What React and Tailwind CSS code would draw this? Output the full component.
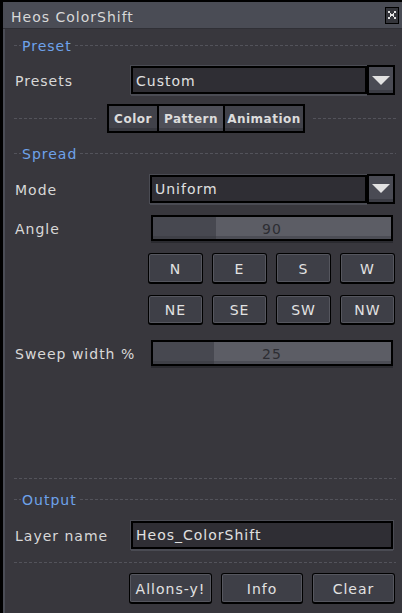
import React from 'react';

const Dash = ({ className = '' }) => (
    <div className={`h-px bg-[repeating-linear-gradient(90deg,#53535b_0_3px,transparent_3px_5px)] ${className}`} />
);

const Header = ({ title }) => (
    <div className="flex items-center h-[20px]">
        <Dash className="w-[7px]" />
        <span className="px-[1px] pt-[1px] text-[#6ea2ea]">{title}</span>
        <Dash className="flex-1 ml-[2px]" />
    </div>
);

const Field = ({ children, className = '' }) => (
    <div className={`h-[28px] bg-[#2f2e34] border-2 border-black shadow-[0_2px_0_0_#4a4b53,0_0_0_1px_#4a4b53] flex items-center pl-[3px] pt-[1px] text-[#e0e0e0] ${className}`}>
        {children}
    </div>
);

const Arrow = () => (
    <div className="w-[28px] h-[30px] bg-[#4a4b54] border-2 border-black shadow-[inset_0_-3px_0_#3b3c44] flex items-center justify-center">
        <svg width="18" height="9" viewBox="0 0 18 9">
            <polygon points="0,0 18,0 9,9" fill="#e2e2e2" />
        </svg>
    </div>
);

const Slider = ({ fill, value }) => (
    <div className="grid w-[242px] h-[26px] border-2 border-black bg-[#5c5d65] shadow-[inset_0_-3px_0_#4c4d55,0_2px_0_#2a2a2f]">
        <div className="col-start-1 row-start-1 flex">
            <div className="h-full bg-[#474850] shadow-[inset_0_-3px_0_#3f4047]" style={{ width: fill }} />
        </div>
        <div className="col-start-1 row-start-1 flex items-center justify-center pt-[1px] text-[#2d2d33]">{value}</div>
    </div>
);

const Btn = ({ children, className = '' }) => (
    <div className={`flex items-center justify-center h-full rounded-[3px] border border-b-2 border-black bg-[#3e3f47] shadow-[inset_0_0_0_1px_#55565e] pt-[1px] text-[#e2e2e2] ${className}`}>
        {children}
    </div>
);

const Row = ({ label, labelW, className = '', children }) => (
    <div className={`flex items-center ${className}`}>
        <div className="pl-[1px] pt-[2px] text-[#d8d8d8]" style={{ width: labelW }}>{label}</div>
        {children}
    </div>
);

export default function App() {
    const dirs1 = ['N', 'E', 'S', 'W'];
    const dirs2 = ['NE', 'SE', 'SW', 'NW'];

    return (
        <div className="w-[402px] h-[613px] bg-black pl-[3px] pt-[2px] font-['DejaVu_Sans',sans-serif] text-[14px] tracking-[1px] leading-none">
            <div className="h-full flex flex-col bg-[#38373d] border-l-2 border-[#4b4d56]">
                {/* title bar */}
                <div className="h-[27px] -ml-[2px] bg-[#4a4c55] border-b border-[#303036] flex items-center justify-between pl-[8px] pr-[3px]">
                    <span className="pt-[3px] text-[#d8d8d8]">Heos ColorShift</span>
                    <div className="w-[14px] h-[17px] bg-[#34353b] border border-black flex items-center justify-center">
                        <svg width="8" height="8" viewBox="0 0 8 8" shapeRendering="crispEdges">
                            <path d="M0 0h2v2H0zM6 0h2v2H6zM2 2h4v4H2zM0 6h2v2H0zM6 6h2v2H6z" fill="#e2e2e2" />
                            <path d="M3 2h2v1H3zM3 5h2v1H3z" fill="#34353b" />
                        </svg>
                    </div>
                </div>

                <div className="flex flex-col pl-[9px] pr-[6px]">
                    <div className="mt-[6px]"><Header title="Preset" /></div>

                    <Row label="Presets" labelW={117} className="mt-[10px] h-[30px]">
                        <Field className="w-[236px]">Custom</Field>
                        <Arrow />
                    </Row>

                    <div className="mt-[9px] h-[29px] flex items-center">
                        <Dash className="w-[82px]" />
                        <div className="ml-[11px] flex h-full border-2 border-black bg-black gap-[2px] text-[12px] font-bold tracking-[0.5px] text-[#dcdcdc]">
                            <div className="w-[48px] flex items-center justify-center bg-[#41424a] shadow-[inset_0_-3px_0_#36373e]">Color</div>
                            <div className="w-[64px] flex items-center justify-center bg-[#4e4f58] shadow-[inset_0_-3px_0_#42434b]">Pattern</div>
                            <div className="w-[78px] flex items-center justify-center bg-[#41424a] shadow-[inset_0_-3px_0_#36373e]">Animation</div>
                        </div>
                        <Dash className="flex-1 ml-[8px]" />
                    </div>

                    <div className="mt-[10px]"><Header title="Spread" /></div>

                    <Row label="Mode" labelW={136} className="mt-[11px] h-[29px]">
                        <Field className="w-[217px] h-[26px]">Uniform</Field>
                        <Arrow />
                    </Row>

                    <Row label="Angle" labelW={137} className="mt-[12px] h-[26px]">
                        <Slider fill={63} value="90" />
                    </Row>

                    <div className="mt-[12px] h-[31px] ml-[134px] w-[247px] grid grid-cols-4 gap-[9px]">
                        {dirs1.map(d => <Btn key={d}>{d}</Btn>)}
                    </div>
                    <div className="mt-[11px] h-[30px] ml-[134px] w-[247px] grid grid-cols-4 gap-[9px]">
                        {dirs2.map(d => <Btn key={d}>{d}</Btn>)}
                    </div>

                    <Row label="Sweep width %" labelW={137} className="mt-[15px] h-[26px]">
                        <Slider fill={61} value="25" />
                    </Row>

                    <Dash className="mt-[112px]" />

                    <div className="mt-[10px]"><Header title="Output" /></div>

                    <Row label="Layer name" labelW={117} className="mt-[13px] h-[25px]">
                        <Field className="w-[262px] h-[25px]">Heos_ColorShift</Field>
                    </Row>

                    <Dash className="mt-[15px]" />

                    <div className="mt-[10px] h-[31px] ml-[115px] flex gap-[9px]">
                        <Btn className="w-[83px]">Allons-y!</Btn>
                        <Btn className="w-[82px]">Info</Btn>
                        <Btn className="w-[83px]">Clear</Btn>
                    </div>
                </div>
            </div>
        </div>
    );
}
